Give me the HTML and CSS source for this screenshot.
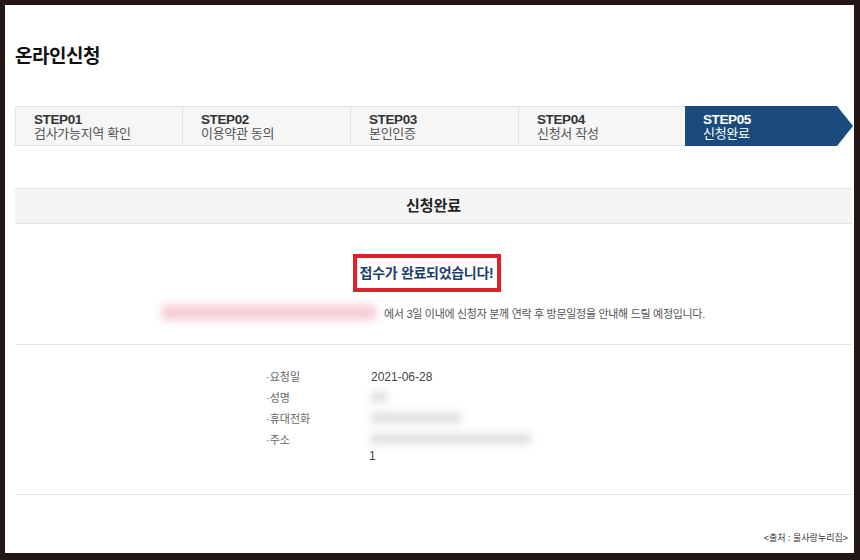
FILE: index.html
```html
<!DOCTYPE html>
<html lang="ko">
<head>
  <meta charset="UTF-8">
  <title>온라인신청</title>
  <link rel="stylesheet" href="styles.css">
</head>
<body>
  <div class="frame">
    <div class="page">
      <h1>온라인신청</h1>

      <ol class="steps">
        <li class="step"><b>STEP01</b><span>검사가능지역 확인</span></li>
        <li class="step"><b>STEP02</b><span>이용약관 동의</span></li>
        <li class="step"><b>STEP03</b><span>본인인증</span></li>
        <li class="step"><b>STEP04</b><span>신청서 작성</span></li>
        <li class="step active"><b>STEP05</b><span>신청완료</span></li>
      </ol>

      <h2 class="section-title">신청완료</h2>

      <div class="done">
        <div class="done-box">접수가 완료되었습니다!</div>
      </div>
      <p class="notice">
        <span class="blur blur-pink"></span>
        에서 3일 이내에 신청자 분께 연락 후 방문일정을 안내해 드릴 예정입니다.
      </p>

      <div class="info-wrap">
        <dl class="info">
          <dt>·요청일</dt>
          <dd>2021-06-28</dd>
          <dt>·성명</dt>
          <dd><span class="blur blur-grey w-name"></span></dd>
          <dt>·휴대전화</dt>
          <dd><span class="blur blur-grey w-phone"></span></dd>
          <dt>·주소</dt>
          <dd><span class="blur blur-grey w-addr"></span><br><span class="addr2">1</span></dd>
        </dl>
      </div>

      <p class="source">&lt;출처 : 물사랑누리집&gt;</p>
    </div>
  </div>
</body>
</html>
```

FILE: styles.css
```css
* {
  box-sizing: border-box;
}

body {
  margin: 0;
  background: #231815;
  font-family: "Liberation Sans", "Noto Sans CJK KR", sans-serif;
  color: #444;
}

.frame {
  margin: 5px 6px 0 5px;
  height: 548px;
  background: #fff;
  overflow: hidden;
}

.page {
  padding: 0 2px 0 10px;
}

h1 {
  margin: 0;
  padding-top: 39px;
  font-size: 19px;
  line-height: 26px;
  font-weight: bold;
  color: #111;
  letter-spacing: -0.5px;
}

.steps {
  list-style: none;
  margin: 36px 0 0;
  padding: 0;
  display: grid;
  grid-template-columns: 167px 168px 168px 167px 168px;
  height: 40px;
}

.step {
  display: flex;
  flex-direction: column;
  justify-content: center;
  padding-left: 18px;
  background: #f6f6f6;
  border-top: 1px solid #e4e4e4;
  border-bottom: 1px solid #e4e4e4;
  border-left: 1px solid #e4e4e4;
  font-size: 13px;
  line-height: 13px;
  color: #555;
}

.step b {
  color: #333;
  font-size: 13.5px;
  letter-spacing: -0.4px;
}

.step span {
  margin-top: 1px;
  letter-spacing: -0.3px;
}

.step.active {
  background: #1b4b7d;
  border: none;
  color: #fff;
  clip-path: polygon(0 0, calc(100% - 16px) 0, 100% 50%, calc(100% - 16px) 100%, 0 100%);
}

.step.active b {
  color: #fff;
}

.section-title {
  margin: 42px 0 0;
  height: 36px;
  background: #f5f5f5;
  border-top: 1px solid #e4e4e4;
  border-bottom: 1px solid #e4e4e4;
  text-align: center;
  font-size: 15px;
  line-height: 34px;
  color: #222;
}

.done {
  display: flex;
  justify-content: center;
  padding-right: 14px;
  margin-top: 30px;
}

.done-box {
  width: 148px;
  height: 38px;
  border: 4px solid #e0202a;
  text-align: center;
  line-height: 30px;
  font-size: 14px;
  font-weight: bold;
  color: #1d3f6d;
  letter-spacing: -0.3px;
}

.notice {
  margin: 11px 0 0;
  padding-bottom: 22px;
  border-bottom: 1px solid #e4e4e4;
  display: flex;
  align-items: center;
  justify-content: center;
  gap: 8px;
  font-size: 11px;
  color: #555;
  letter-spacing: -0.3px;
  height: 42px;
}

.blur {
  display: inline-block;
  height: 12px;
  filter: blur(3px);
}

.blur-pink {
  width: 214px;
  height: 15px;
  background: #f4cdd4;
  filter: blur(4px);
}

.blur-grey {
  background: #dcdcdc;
  height: 10px;
  filter: blur(4px);
}

.w-name { width: 16px; }
.w-phone { width: 90px; }
.w-addr { width: 160px; }

.info-wrap {
  padding: 24px 0 30px 251px;
  border-bottom: 1px solid #e4e4e4;
}

.info {
  margin: 0;
  display: grid;
  grid-template-columns: 105px 1fr;
  row-gap: 5px;
  font-size: 11px;
  line-height: 16px;
  color: #666;
}

.info dt,
.info dd {
  margin: 0;
}

.info dd {
  color: #444;
  font-size: 12px;
}

.addr2 {
  margin-left: -2px;
}

.source {
  margin: 36px 4px 0 0;
  text-align: right;
  font-size: 9px;
  color: #333;
}
```
